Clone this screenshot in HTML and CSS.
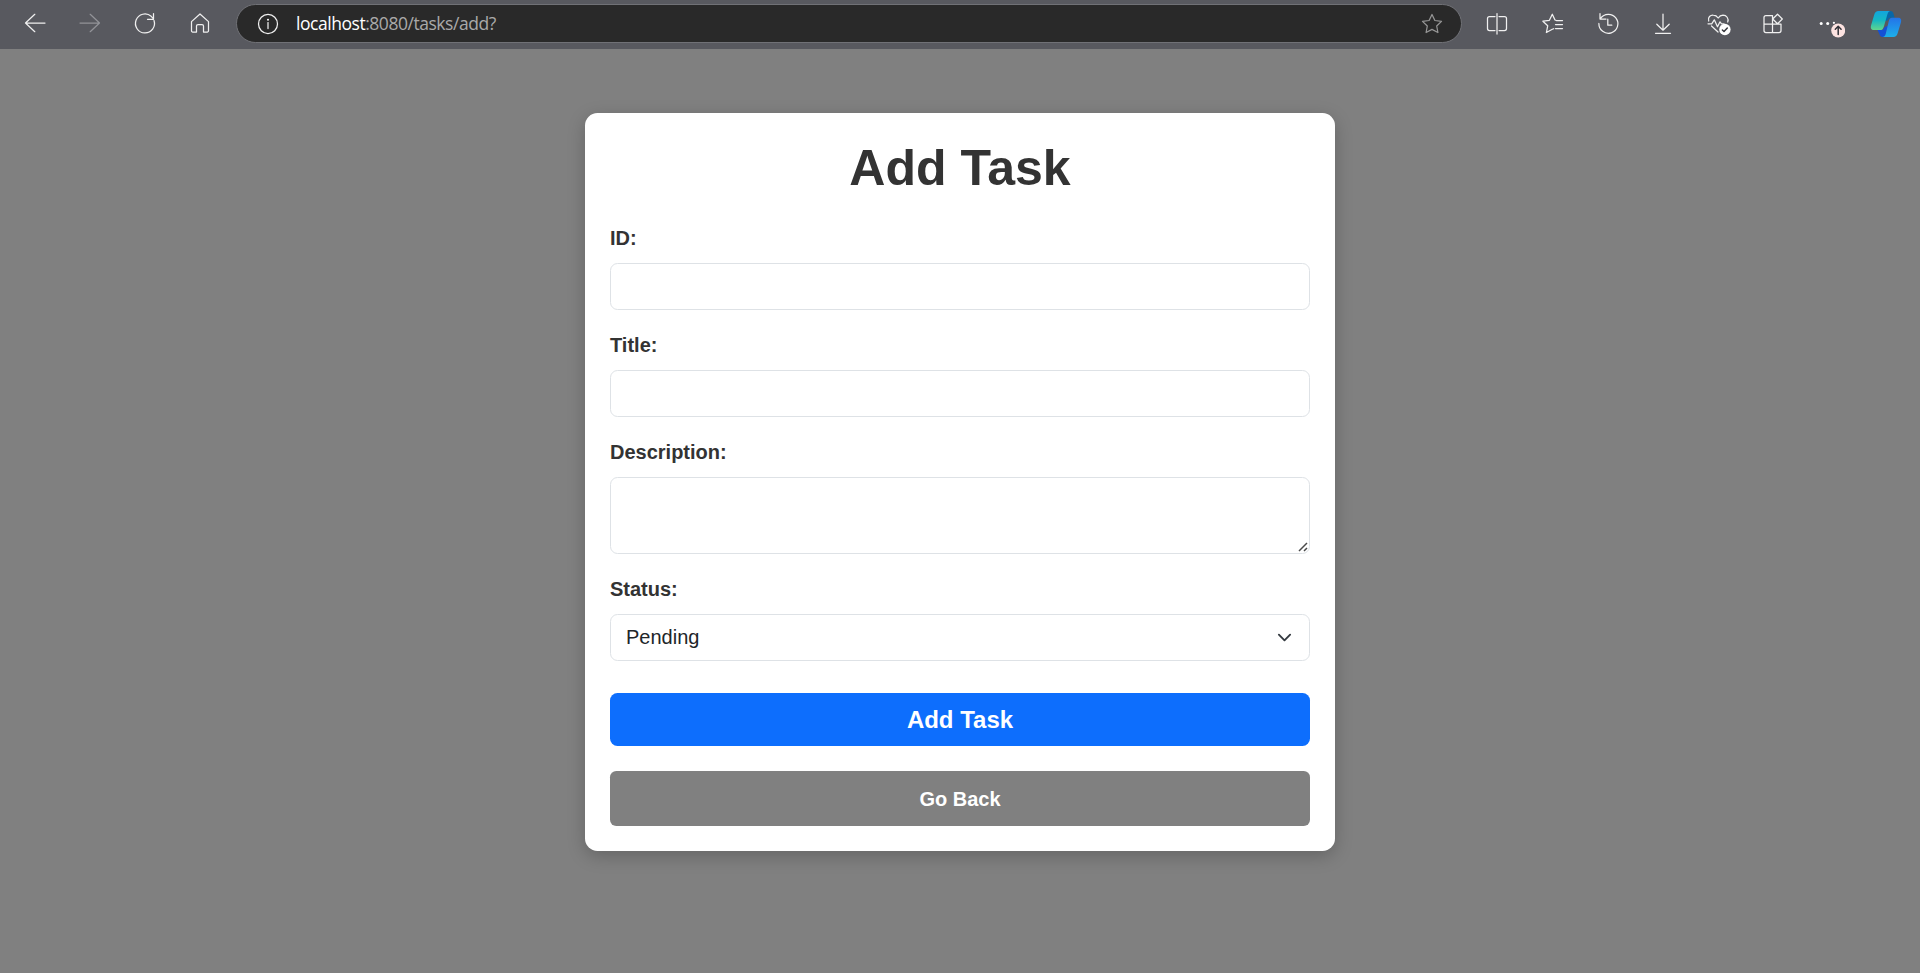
FILE: index.html
```html
<!DOCTYPE html>
<html lang="en">
<head>
<meta charset="utf-8">
<title>Add Task</title>
<link rel="stylesheet" href="styles.css">
</head>
<body>
<header class="toolbar">
  <div class="nav">
    <svg class="icon" viewBox="0 0 32 32"><path d="M26 15H6.500M15.800 6.300L6.500 15l9.300 8.700"/></svg>
    <svg class="icon icon-dim" viewBox="0 0 32 32"><path d="M6 15h19.500M16.200 6.300L25.500 15l-9.300 8.700"/></svg>
    <svg class="icon" viewBox="0 0 32 32"><path d="M25 12.500a9.500 9.500 0 1 1-2.800-4.200l2.200 2.400M24.500 5.500v5.800h-6"/></svg>
    <svg class="icon" viewBox="0 0 32 32"><path d="M7.500 13.600L16 6l8.500 7.600v9.200a1.200 1.200 0 0 1-1.200 1.200h-3.800v-6a1.500 1.500 0 0 0-1.500-1.500h-4a1.500 1.500 0 0 0-1.500 1.500v6H8.700a1.200 1.200 0 0 1-1.200-1.200z"/></svg>
  </div>
  <div class="address">
    <svg class="icon" viewBox="0 0 32 32"><circle cx="16" cy="16" r="9.500"/><path d="M16 14.500v6"/><circle class="solid" cx="16" cy="11.700" r="1"/></svg>
    <div class="url"><span class="host">localhost</span>:8080/tasks/add?</div>
    <svg class="icon icon-star" viewBox="0 0 32 32"><path d="M16 6.500l2.900 6l6.600.900l-4.800 4.600l1.200 6.500l-5.900-3.100l-5.900 3.100l1.200-6.500l-4.800-4.600l6.600-.900z"/></svg>
  </div>
  <div class="tools">
    <svg class="icon" viewBox="0 0 32 32"><path d="M14 8.500H8.500a2 2 0 0 0-2 2v10a2 2 0 0 0 2 2H14M18 8.500h5.500a2 2 0 0 1 2 2v10a2 2 0 0 1-2 2H18M16 5.500V26"/></svg>
    <svg class="icon" viewBox="0 0 32 32"><path d="M26.500 12.500h-6.200L19 12l-2.700-5.800l-2.900 6.100l-6.500.900l4.800 4.600l-1.300 6.700l5.900-3.200l1.400-.600M19.500 16.500h7M19.500 20.500h7"/></svg>
    <svg class="icon" viewBox="0 0 32 32"><path d="M8.500 10.500a9.500 9.500 0 1 1-1.600 5M8 5.500v5.500h6M15.800 11.200v6h4"/></svg>
    <svg class="icon" viewBox="0 0 32 32"><path d="M16 6v16M9.800 16.200l6.200 6l6.200-6M8.500 25.300h15"/></svg>
    <svg class="icon" viewBox="0 0 32 32"><path d="M6.700 13C5.500 9 8.500 7 11.300 7.200c2.200.100 3.800 1.200 4.900 2.800c1.300-1.900 3-2.700 4.800-2.800c3.500 0 6 3.200 4.700 6.800M6 15.800h3.700l2.600-4l3.200 7l2.500-5l1.500 2h2.500M9.500 18l6.500 6"/><circle class="solid" cx="22.900" cy="21.500" r="5.700"/><path class="mark" d="M20.400 22l1.600 1.500l3.300-3.500"/></svg>
    <svg class="icon" viewBox="0 0 32 32"><path d="M15.500 7.500H9a2 2 0 0 0-2 2v13a2 2 0 0 0 2 2h13a2 2 0 0 0 2-2V16H7M15.500 7.500v17M20.500 6.200l4.800 4.800l-4.800 4.800l-4.800-4.800z"/></svg>
    <svg class="icon" viewBox="0 0 32 32"><g class="solid"><circle cx="8.200" cy="15.500" r="1.500"/><circle cx="14.700" cy="15.500" r="1.500"/><circle cx="20.900" cy="14.800" r="1.100"/></g><circle class="badge" cx="25.200" cy="22.500" r="7"/><path class="mark" d="M25.200 26.500v-8M22.300 21.200l2.900-2.900l2.900 2.900"/></svg>
    <svg class="icon copilot" viewBox="0 0 32 32">
      <defs>
        <linearGradient id="leaf" x1="0" y1="0" x2="0" y2="1"><stop offset="0" stop-color="#12a5de"/><stop offset=".5" stop-color="#16b8c2"/><stop offset="1" stop-color="#62d58c"/></linearGradient>
        <linearGradient id="wave" x1="0" y1="0" x2="0" y2="1"><stop offset="0" stop-color="#2473e8"/><stop offset="1" stop-color="#1cafea"/></linearGradient>
      </defs>
      <path fill="#0867a8" d="M15 3h5.500c1.700 0 2.500 1 3 2.700l1.200 4H21c-1.500 0-2.300.700-3 2.500l-3 1z"/>
      <path fill="#1450d6" d="M7.500 22H11c1.700 0 2.700-.700 3.200-2.500l4-2L15 29h-2.500c-1.700 0-2.500-1-3-2.700z"/>
      <path fill="url(#leaf)" d="M8.500 3h12c-1.500 0-2.400 1-3 3l-3.600 12.500C13 21.500 12 22 10 22H4c-2.800 0-3.700-2-2.900-4.800L4.300 6.500C5 4.200 6.200 3 8.500 3z"/>
      <path fill="url(#wave)" d="M22 9.700h6c2.800 0 3.700 2 2.900 4.700L27.700 25c-.700 2.700-2 4-4.300 4h-11c1.700 0 2.700-1 3.300-3l3-12.500c.700-2.700 1.500-3.800 3.300-3.800z"/>
    </svg>
  </div>
</header>
<main class="page">
  <form class="card">
    <h1 class="title">Add Task</h1>
    <label class="label" for="id">ID:</label>
    <input class="control" id="id" type="text">
    <label class="label" for="title">Title:</label>
    <input class="control" id="title" type="text">
    <label class="label" for="description">Description:</label>
    <div class="area">
      <textarea class="control control-area" id="description"></textarea>
      <svg class="grip" viewBox="0 0 10 10"><path d="M1 9l8-8M6 9l3-3"/></svg>
    </div>
    <label class="label" for="status">Status:</label>
    <div class="control control-select" id="status">
      <span>Pending</span>
      <svg class="chevron" viewBox="0 0 16 16"><path d="M2 5l6 6l6-6"/></svg>
    </div>
    <button class="button button-primary" type="button">Add Task</button>
    <button class="button button-back" type="button">Go Back</button>
  </form>
</main>
</body>
</html>
```
FILE: styles.css
```css
* { box-sizing: border-box; }

body {
  margin: 0;
  min-height: 973px;
  background: #808080;
  font-family: "Liberation Sans", Arial, sans-serif;
  font-size: 20px;
  color: #212529;
}

.toolbar {
  display: flex;
  align-items: flex-start;
  height: 49px;
  padding: 4px 0 0 19px;
  background: #58595f;
}

.nav, .tools {
  display: flex;
  padding-top: 4px;
  flex-shrink: 0;
}
.nav { gap: 23px; }
.tools { gap: 23.3px; margin-left: 20px; }

.icon {
  display: block;
  flex-shrink: 0;
  width: 32px;
  height: 32px;
  fill: none;
  stroke: #f0f0f0;
  stroke-width: 1.25;
  stroke-linecap: round;
  stroke-linejoin: round;
}
.icon-dim { stroke: #929398; }
.icon-star { stroke: #969696; margin-left: auto; }
.solid { fill: #fff; stroke: none; }
.badge { fill: #fde3e1; stroke: none; }
.mark { stroke: #33343a; stroke-width: 1.5; }
.copilot { margin-left: 2px; stroke: none; }

.address {
  display: flex;
  align-items: center;
  flex-shrink: 0;
  width: 1226px;
  height: 39px;
  margin-left: 20px;
  margin-right: -1px;
  padding: 0 13px 0 15px;
  border: 1px solid #707176;
  border-radius: 20px;
  background: #292929;
}

.url {
  margin: -2px 0 0 12px;
  font-family: "Open Sans", "Noto Sans", sans-serif;
  font-size: 17.5px;
  letter-spacing: -0.46px;
  line-height: 24px;
  color: #a9a9a9;
}
.host { color: #fff; }

.page {
  display: flex;
  justify-content: center;
  padding-top: 64px;
}

.card {
  display: flex;
  flex-direction: column;
  width: 750px;
  height: 738px;
  padding: 25px;
  border-radius: 12.5px;
  background: #fff;
  box-shadow: 0 5px 18px rgba(0, 0, 0, 0.22);
}

.title {
  margin: 0 0 25px;
  font-size: 50px;
  font-weight: 700;
  line-height: 60px;
  text-align: center;
  color: #333;
}

.label {
  margin-bottom: 10px;
  font-weight: 700;
  line-height: 30px;
  color: #333;
}

.control {
  display: block;
  width: 100%;
  height: 47px;
  margin: 0 0 20px;
  padding: 7px 15px;
  border: 1px solid #dee2e6;
  border-radius: 7.5px;
  background: #fff;
  font: inherit;
  color: #212529;
}
.area { position: relative; margin-bottom: 20px; }
.control-area { height: 77px; margin: 0; resize: none; }
.grip {
  position: absolute;
  right: 2px;
  bottom: 2px;
  width: 10px;
  height: 10px;
  fill: none;
  stroke: #4a4a4a;
  stroke-width: 1.5;
}
.control-select {
  display: flex;
  align-items: center;
  justify-content: space-between;
  margin-bottom: 32px;
}

.chevron {
  width: 15px;
  height: 15px;
  margin-right: 2px;
  fill: none;
  stroke: #343a40;
  stroke-width: 2;
  stroke-linecap: round;
  stroke-linejoin: round;
}

.button {
  width: 100%;
  padding: 0;
  border: 0;
  font: inherit;
  font-weight: 700;
  color: #fff;
}
.button-primary {
  height: 53px;
  margin-bottom: 25px;
  border-radius: 7.5px;
  background: #0d6efd;
  font-size: 24px;
}
.button-back {
  height: 55px;
  padding-top: 2px;
  border-radius: 6.25px;
  background: #808080;
}
```
